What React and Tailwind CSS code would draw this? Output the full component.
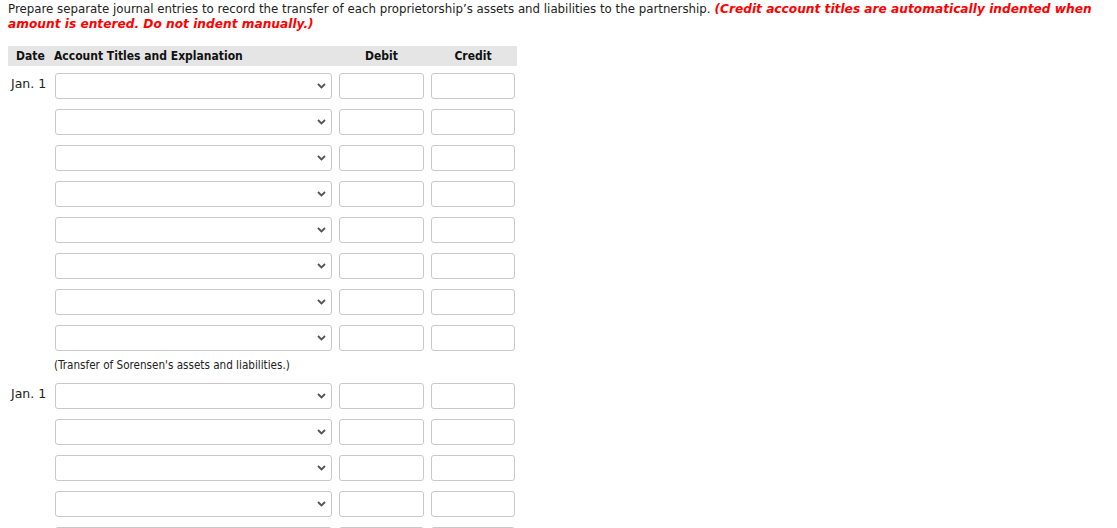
import React from 'react';

const Chevron = () => (
  <svg width="9" height="6" viewBox="0 0 9 6" className="absolute right-[5px] top-1/2 -translate-y-1/2">
    <path d="M1 1 L4.5 4.5 L8 1" fill="none" stroke="#555" strokeWidth="1.8" />
  </svg>
);

const EntryRow = ({ date }) => (
  <div className="flex items-center h-[36px] py-[5px]">
    <div className="w-[47px] pl-[3px] pb-[4px] text-[12.5px] text-[#222] font-['DejaVu_Sans',sans-serif]">
      {date}
    </div>
    <div className="relative w-[277px] h-[26px] rounded-[3px] border border-[#c9c9c9] bg-white">
      <Chevron />
    </div>
    <div className="ml-[7px] w-[85px] h-[26px] rounded-[3px] border border-[#c9c9c9] bg-white" />
    <div className="ml-[7px] w-[84px] h-[26px] rounded-[3px] border border-[#c9c9c9] bg-white" />
  </div>
);

const EntryGroup = ({ rows, note }) => (
  <div>
    {Array.from({ length: rows }).map((_, i) => (
      <EntryRow key={i} date={i === 0 ? 'Jan. 1' : ''} />
    ))}
    {note && (
      <div className="h-[22px] pl-[46px] text-[11.6px] leading-[18px] text-[#222] font-['DejaVu_Sans_Condensed','DejaVu_Sans',sans-serif]">
        {note}
      </div>
    )}
  </div>
);

export default function App() {
  return (
    <div className="bg-white h-[528px] overflow-hidden px-[8px] pt-[2px] text-[#222]">
      <p className="text-[11.8px] leading-[15px] font-['DejaVu_Sans',sans-serif]">
        Prepare separate journal entries to record the transfer of each proprietorship’s assets and liabilities to the partnership.{' '}
        <span className="text-[12.2px] font-bold italic text-[#f00]">
          (Credit account titles are automatically indented when amount is entered. Do not indent manually.)
        </span>
      </p>

      <div className="mt-[14px] w-[509px]">
        <div className="flex items-center h-[20px] bg-[#e5e5e5] text-[12px] font-bold text-[#111] font-['DejaVu_Sans_Condensed','DejaVu_Sans',sans-serif]">
          <div className="w-[46px] pl-[8px]">Date</div>
          <div className="w-[285px]">Account Titles and Explanation</div>
          <div className="w-[85px] text-center">Debit</div>
          <div className="ml-[7px] w-[84px] text-center">Credit</div>
        </div>
        <div className="pt-[2px]">
          <EntryGroup rows={8} note="(Transfer of Sorensen's assets and liabilities.)" />
          <EntryGroup rows={6} />
        </div>
      </div>
    </div>
  );
}
